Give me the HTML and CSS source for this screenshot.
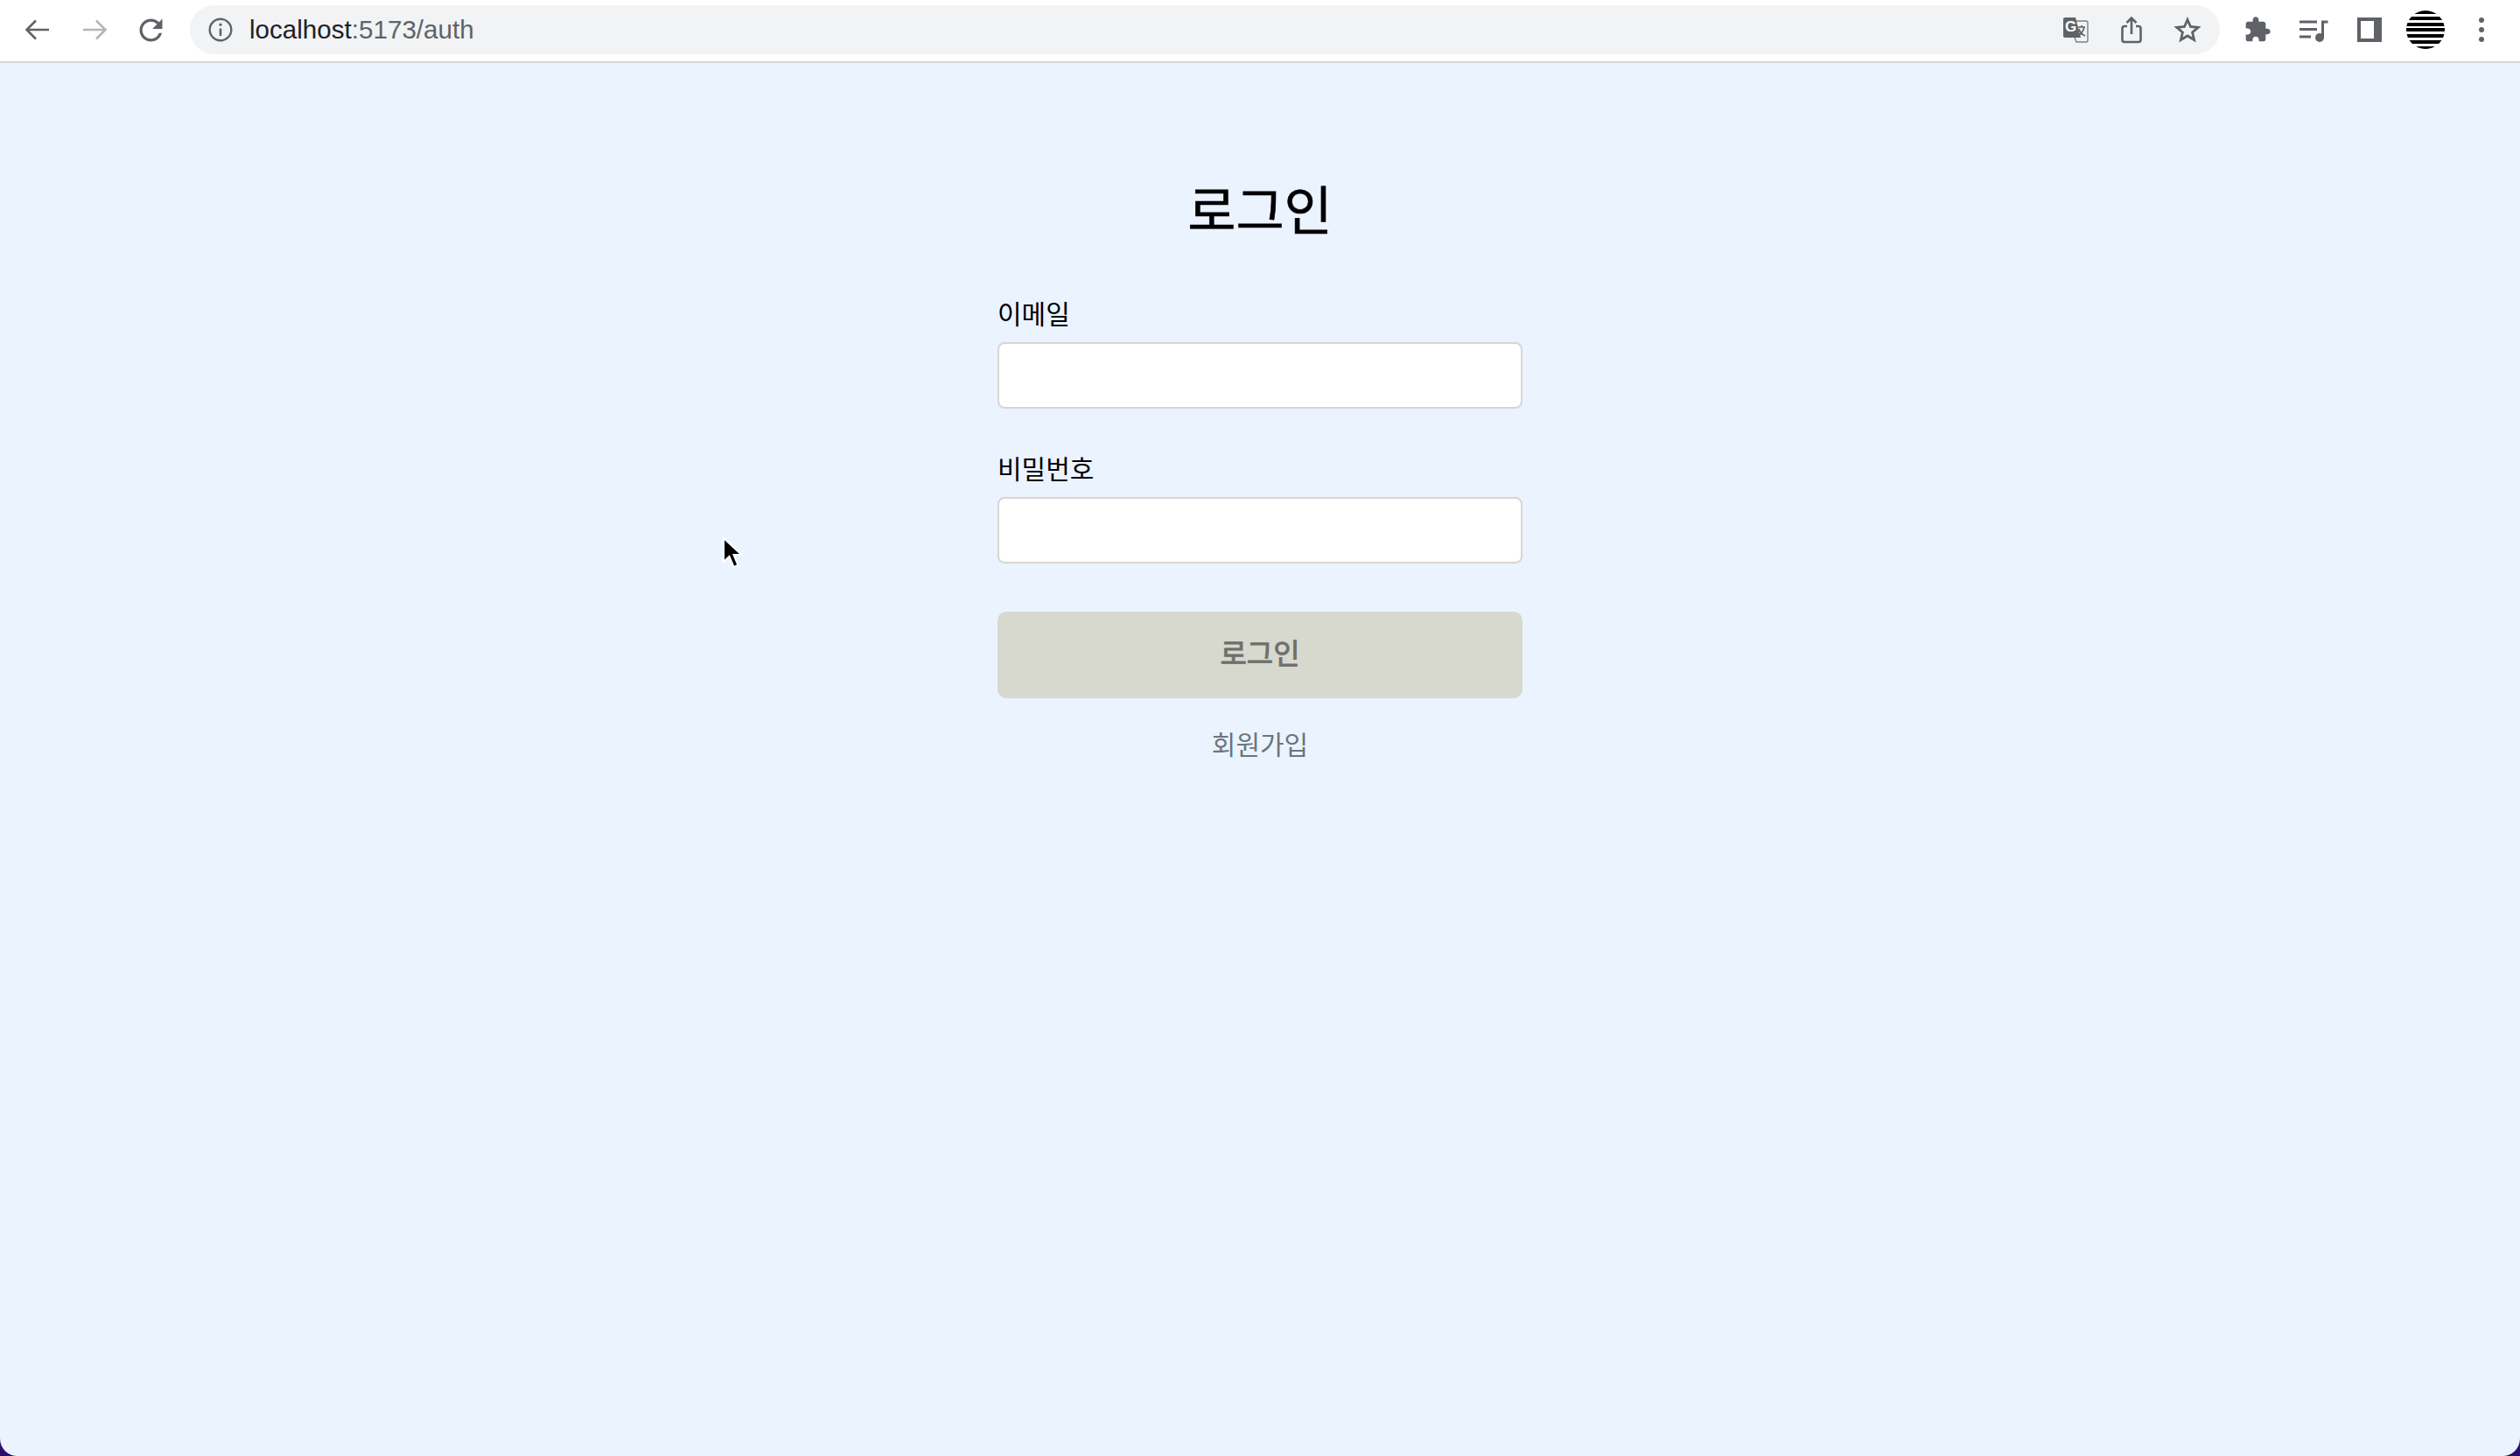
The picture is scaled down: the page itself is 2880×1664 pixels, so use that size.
FILE: index.html
```html
<!DOCTYPE html>
<html lang="ko">
<head>
  <meta charset="UTF-8">
  <title>로그인</title>
  <link rel="stylesheet" href="styles.css">
</head>
<body>
  <div class="window">
    <!-- Browser toolbar -->
    <div class="toolbar">
      <div class="nav-group">
        <span class="tool-btn">
          <svg width="32" height="32" viewBox="0 0 32 32" fill="none" stroke="#5f6368" stroke-width="2.6"><path d="M29 16H4M14 5.5 3.5 16 14 26.5"/></svg>
        </span>
        <span class="tool-btn">
          <svg width="32" height="32" viewBox="0 0 32 32" fill="none" stroke="#b4b6b9" stroke-width="2.6"><path d="M3 16h25M18 5.5 28.5 16 18 26.5"/></svg>
        </span>
        <span class="tool-btn">
          <svg width="39" height="39" viewBox="0 0 24 24" fill="#5f6368"><path d="M17.65 6.35C16.2 4.9 14.21 4 12 4c-4.42 0-7.99 3.58-7.99 8s3.57 8 7.99 8c3.73 0 6.84-2.55 7.73-6h-2.08c-.82 2.33-3.04 4-5.65 4-3.31 0-6-2.69-6-6s2.69-6 6-6c1.66 0 3.14.69 4.22 1.78L13 11h7V4l-2.35 2.35z"/></svg>
        </span>
      </div>
      <div class="omnibox">
        <svg class="site-info" width="32" height="32" viewBox="0 0 32 32" fill="none" stroke="#5f6368" stroke-width="2.4"><circle cx="16" cy="16" r="12.3"/><path d="M16 14.5v8.5" stroke-width="2.6"/><circle cx="16" cy="10.2" r="1.6" fill="#5f6368" stroke="none"/></svg>
        <span class="url"><span class="url-host">localhost</span>:5173/auth</span>
        <span class="omni-actions">
          <span class="tool-btn">
            <svg width="32" height="32" viewBox="0 0 32 32">
              <path d="M9 6h12l7 0a2 2 0 0 1 2 2v20a2 2 0 0 1-2 2H17l-2-5" fill="#f1f3f4" stroke="#7b7f84" stroke-width="1.4"/>
              <path d="M4 2h12l6 23H4a2 2 0 0 1-2-2V4a2 2 0 0 1 2-2z" fill="#5f6368"/>
              <text class="translate-g" x="4" y="18">G</text>
              <path d="M19 13h8M23 11v2M26 13c-1 5-4 8-7 10M20 15c1 4 4 7 7 8" fill="none" stroke="#5f6368" stroke-width="1.7"/>
            </svg>
          </span>
          <span class="tool-btn">
            <svg width="32" height="32" viewBox="0 0 32 32" fill="none" stroke="#5f6368" stroke-width="2.6"><path d="M11 12H8a2.5 2.5 0 0 0-2.5 2.5v13A2.5 2.5 0 0 0 8 30h16a2.5 2.5 0 0 0 2.5-2.5v-13A2.5 2.5 0 0 0 24 12h-3M16 21V3M10.5 8 16 2.500 21.500 8"/></svg>
          </span>
          <span class="tool-btn">
            <svg width="32" height="32" viewBox="0 0 32 32" fill="none" stroke="#5f6368" stroke-width="2.8" stroke-linejoin="miter"><path d="m16 4.500 3.500 8 8.700.8-6.600 5.700 2 8.500-7.600-4.500-7.600 4.500 2-8.500-6.600-5.700 8.700-.8z"/></svg>
          </span>
        </span>
      </div>
      <div class="ext-group">
        <span class="tool-btn">
          <svg width="32" height="32" viewBox="0 0 24 24" fill="#5f6368"><path d="M20.500 11H19V7c0-1.100-.9-2-2-2h-4V3.500C13 2.120 11.880 1 10.500 1S8 2.120 8 3.500V5H4c-1.100 0-1.990.9-1.990 2v3.800H3.500c1.490 0 2.700 1.210 2.700 2.700s-1.210 2.700-2.700 2.700H2V20c0 1.100.9 2 2 2h3.800v-1.500c0-1.490 1.210-2.700 2.700-2.700 1.490 0 2.700 1.210 2.700 2.700V22H17c1.100 0 2-.9 2-2v-4h1.500c1.380 0 2.500-1.120 2.500-2.500S21.880 11 20.500 11z"/></svg>
        </span>
        <span class="tool-btn">
          <svg width="34" height="32" viewBox="0 0 34 32" fill="none" stroke="#5f6368" stroke-width="3"><path d="M1 7h20M1 15.500h20M1 24h13"/><circle cx="24" cy="25" r="5" fill="#5f6368" stroke="none"/><path d="M27.500 25V7h6"/></svg>
        </span>
        <span class="tool-btn">
          <span class="sidebar-icon"></span>
        </span>
        <span class="tool-btn">
          <span class="avatar"></span>
        </span>
        <span class="tool-btn">
          <svg width="8" height="30" viewBox="0 0 8 30" fill="#5f6368"><circle cx="4" cy="4" r="3"/><circle cx="4" cy="15" r="3"/><circle cx="4" cy="26" r="3"/></svg>
        </span>
      </div>
    </div>

    <!-- Login page -->
    <main class="page">
      <h1 class="title">로그인</h1>
      <form class="auth-form">
        <label class="field-label" for="email">이메일</label>
        <input class="field-input" id="email" type="email">
        <label class="field-label" for="password">비밀번호</label>
        <input class="field-input" id="password" type="password">
        <button class="submit-btn" type="button" disabled>로그인</button>
        <a class="signup-link" href="#">회원가입</a>
      </form>
      <svg class="cursor" width="26" height="40" viewBox="0 0 26 40"><path d="M3 2v27l6.500-6 5 12 5-2-5-12h9z" fill="#000" stroke="#fff" stroke-width="2"/></svg>
    </main>
  </div>
</body>
</html>
```

FILE: styles.css
```css
html, body {
  height: 100%;
}
body {
  margin: 0;
  background-color: #2a0f6e;
  font-family: "Noto Sans CJK KR", "Noto Sans", sans-serif;
  color: #000;
}
.window {
  height: 100%;
  display: flex;
  flex-direction: column;
  border-radius: 0 0 20px 20px;
  overflow: hidden;
}

/* toolbar */
.toolbar {
  display: flex;
  align-items: center;
  height: 68px;
  padding-bottom: 2px;
  flex-shrink: 0;
  background-color: #fff;
  border-bottom: 2px solid #d4d6d9;
}
.nav-group {
  display: flex;
  padding-left: 10px;
  margin-right: 12px;
}
.tool-btn {
  display: flex;
  align-items: center;
  justify-content: center;
  width: 65px;
  height: 56px;
}
.omnibox {
  flex: 1;
  display: flex;
  align-items: center;
  height: 56px;
  padding-left: 19px;
  padding-right: 5px;
  border-radius: 28px;
  background-color: #f1f3f4;
}
.site-info {
  margin-right: 17px;
}
.url {
  font-family: "Liberation Sans", Arial, sans-serif;
  font-size: 29.6px;
  color: #5f6368;
}
.url-host {
  color: #202124;
}
.omni-actions {
  display: flex;
  margin-left: auto;
}
.omni-actions .tool-btn {
  width: 64px;
}
.translate-g {
  font-family: "Liberation Sans", Arial, sans-serif;
  font-size: 17px;
  font-weight: bold;
  fill: #fff;
}
.ext-group {
  display: flex;
  margin-left: 11px;
  padding-right: 12px;
}
.ext-group .tool-btn {
  width: 64px;
}
.sidebar-icon {
  box-sizing: border-box;
  width: 28px;
  height: 28px;
  background-color: #fff;
  border: 4px solid #5f6368;
  border-right-width: 9px;
}
.avatar {
  width: 44px;
  height: 44px;
  border-radius: 50%;
  background: repeating-linear-gradient(#000 0, #000 4px, #fff 4px, #fff 6.800px);
}

/* page */
.page {
  flex: 1;
  position: relative;
  display: flex;
  flex-direction: column;
  align-items: center;
  background-color: #ebf3ff;
  padding-top: 129px;
}
.title {
  margin: 0 0 61px;
  font-size: 60px;
  line-height: 72px;
  font-weight: 400;
  -webkit-text-stroke: 0.6px #000;
}
.auth-form {
  display: flex;
  flex-direction: column;
  width: 600px;
}
.field-label {
  font-size: 30px;
  line-height: 46px;
  margin-bottom: 11px;
}
.field-input {
  box-sizing: border-box;
  height: 76px;
  margin-bottom: 44px;
  padding: 0 20px;
  background-color: #fff;
  border: 2px solid #d6d6d2;
  border-radius: 8px;
}
.submit-btn {
  height: 99px;
  margin-top: 11px;
  padding-bottom: 9px;
  border: none;
  border-radius: 10px;
  background-color: #d7d8ce;
  color: #6f706b;
  font-family: inherit;
  font-size: 33px;
  -webkit-text-stroke: 0.9px #6f706b;
}
.signup-link {
  margin-top: 28px;
  text-align: center;
  font-size: 30px;
  line-height: 46px;
  color: #6c757d;
  text-decoration: none;
}
.cursor {
  position: absolute;
  left: 824px;
  top: 541px;
}
```
